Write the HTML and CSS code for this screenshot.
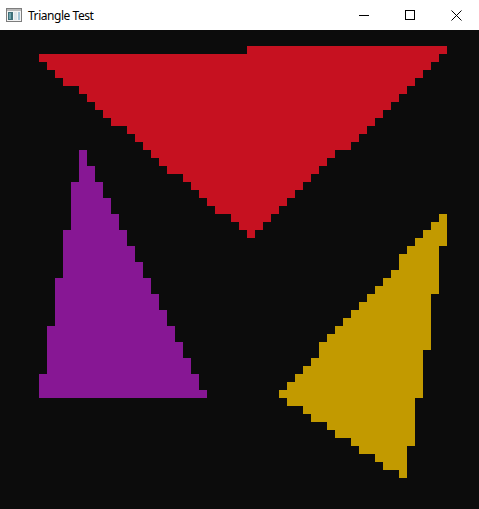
FILE: index.html
```html
<!DOCTYPE html>
<html>
<head>
<meta charset="utf-8">
<title>Triangle Test</title>
<link rel="stylesheet" href="styles.css">
</head>
<body>
<div class="window">
  <header class="titlebar">
    <div class="title">
      <svg class="app-icon" width="16" height="14" viewBox="0 0 16 14">
        <rect x="0.5" y="0.5" width="15" height="13" fill="#f4f4f4" stroke="#7d7d7d"/>
        <rect x="1" y="1" width="14" height="2" fill="#b9b9b9"/>
        <rect x="2" y="4" width="5" height="8" fill="#3f6f78"/>
        <rect x="3" y="5" width="2" height="6" fill="#6fa4ad"/>
        <rect x="8" y="4" width="3" height="8" fill="#dfe6ea"/>
        <rect x="12" y="4" width="2" height="8" fill="#a8c6d6"/>
      </svg>
      <span class="title-text">Triangle Test</span>
    </div>
    <div class="controls">
      <div class="ctrl">
        <svg width="10" height="10" viewBox="0 0 10 10"><line x1="0" y1="5.5" x2="10" y2="5.5" stroke="#000" stroke-width="1"/></svg>
      </div>
      <div class="ctrl">
        <svg width="10" height="10" viewBox="0 0 10 10"><rect x="0.5" y="0.5" width="9" height="9" fill="none" stroke="#000" stroke-width="1"/></svg>
      </div>
      <div class="ctrl">
        <svg width="11" height="11" viewBox="0 0 11 11"><path d="M0.5 0.5 L10.5 10.5 M10.5 0.5 L0.5 10.5" stroke="#000" stroke-width="1" fill="none"/></svg>
      </div>
    </div>
  </header>
  <main class="canvas">
    <svg class="scene" width="479" height="479" viewBox="0 0 479 479" shape-rendering="crispEdges">
      <g class="red">
        <rect x="247" y="16" width="200" height="8"/>
        <rect x="39" y="24" width="400" height="8"/>
        <rect x="47" y="32" width="384" height="8"/>
        <rect x="55" y="40" width="368" height="8"/>
        <rect x="63" y="48" width="352" height="8"/>
        <rect x="79" y="56" width="328" height="8"/>
        <rect x="87" y="64" width="312" height="8"/>
        <rect x="95" y="72" width="296" height="8"/>
        <rect x="103" y="80" width="280" height="8"/>
        <rect x="111" y="88" width="264" height="8"/>
        <rect x="127" y="96" width="240" height="8"/>
        <rect x="135" y="104" width="224" height="8"/>
        <rect x="143" y="112" width="208" height="8"/>
        <rect x="151" y="120" width="184" height="8"/>
        <rect x="159" y="128" width="168" height="8"/>
        <rect x="167" y="136" width="152" height="8"/>
        <rect x="183" y="144" width="128" height="8"/>
        <rect x="191" y="152" width="112" height="8"/>
        <rect x="199" y="160" width="96" height="8"/>
        <rect x="207" y="168" width="80" height="8"/>
        <rect x="215" y="176" width="64" height="8"/>
        <rect x="231" y="184" width="40" height="8"/>
        <rect x="239" y="192" width="24" height="8"/>
        <rect x="247" y="200" width="8" height="8"/>
      </g>
      <g class="purple">
        <rect x="79" y="120" width="8" height="16"/>
        <rect x="79" y="136" width="16" height="16"/>
        <rect x="71" y="152" width="32" height="16"/>
        <rect x="71" y="168" width="40" height="16"/>
        <rect x="71" y="184" width="48" height="16"/>
        <rect x="63" y="200" width="64" height="16"/>
        <rect x="63" y="216" width="72" height="16"/>
        <rect x="63" y="232" width="80" height="16"/>
        <rect x="55" y="248" width="96" height="16"/>
        <rect x="55" y="264" width="104" height="16"/>
        <rect x="55" y="280" width="112" height="16"/>
        <rect x="47" y="296" width="128" height="16"/>
        <rect x="47" y="312" width="136" height="16"/>
        <rect x="47" y="328" width="144" height="16"/>
        <rect x="39" y="344" width="160" height="16"/>
        <rect x="39" y="360" width="168" height="8"/>
      </g>
      <g class="yellow">
        <rect x="439" y="184" width="8" height="8"/>
        <rect x="431" y="192" width="16" height="8"/>
        <rect x="423" y="200" width="24" height="8"/>
        <rect x="415" y="208" width="32" height="8"/>
        <rect x="407" y="216" width="32" height="8"/>
        <rect x="399" y="224" width="40" height="16"/>
        <rect x="391" y="240" width="48" height="8"/>
        <rect x="383" y="248" width="56" height="8"/>
        <rect x="375" y="256" width="64" height="8"/>
        <rect x="367" y="264" width="64" height="8"/>
        <rect x="359" y="272" width="72" height="8"/>
        <rect x="351" y="280" width="80" height="8"/>
        <rect x="343" y="288" width="88" height="8"/>
        <rect x="335" y="296" width="96" height="8"/>
        <rect x="327" y="304" width="104" height="8"/>
        <rect x="319" y="312" width="112" height="8"/>
        <rect x="319" y="320" width="104" height="8"/>
        <rect x="311" y="328" width="112" height="8"/>
        <rect x="303" y="336" width="120" height="8"/>
        <rect x="295" y="344" width="128" height="8"/>
        <rect x="287" y="352" width="136" height="8"/>
        <rect x="279" y="360" width="144" height="8"/>
        <rect x="287" y="368" width="128" height="8"/>
        <rect x="303" y="376" width="112" height="8"/>
        <rect x="311" y="384" width="104" height="8"/>
        <rect x="327" y="392" width="88" height="8"/>
        <rect x="335" y="400" width="80" height="8"/>
        <rect x="351" y="408" width="64" height="8"/>
        <rect x="359" y="416" width="48" height="8"/>
        <rect x="375" y="424" width="32" height="8"/>
        <rect x="383" y="432" width="24" height="8"/>
        <rect x="399" y="440" width="8" height="8"/>
      </g>
    </svg>
  </main>
</div>
</body>
</html>
```
FILE: styles.css
```css
* { box-sizing: border-box; }
html, body {
  margin: 0;
  padding: 0;
  background: #0c0c0c;
  overflow: hidden;
}
.window {
  width: 479px;
  height: 509px;
  display: flex;
  flex-direction: column;
}
.titlebar {
  height: 30px;
  flex: 0 0 30px;
  background: #ffffff;
  display: flex;
  align-items: stretch;
  justify-content: space-between;
}
.title {
  display: flex;
  align-items: center;
  gap: 6px;
  padding-left: 6px;
}
.app-icon { display: block; }
.title-text {
  font-family: "Noto Sans", "Open Sans", sans-serif;
  font-size: 12px;
  color: #000;
  letter-spacing: -0.45px;
}
.controls {
  display: flex;
}
.ctrl {
  width: 46px;
  display: flex;
  align-items: center;
  justify-content: center;
}
.ctrl svg { display: block; }
.canvas {
  flex: 1;
  background: #0c0c0c;
}
.scene { display: block; }
.red rect { fill: #c61120; }
.purple rect { fill: #871794; }
.yellow rect { fill: #c29a00; }
```
